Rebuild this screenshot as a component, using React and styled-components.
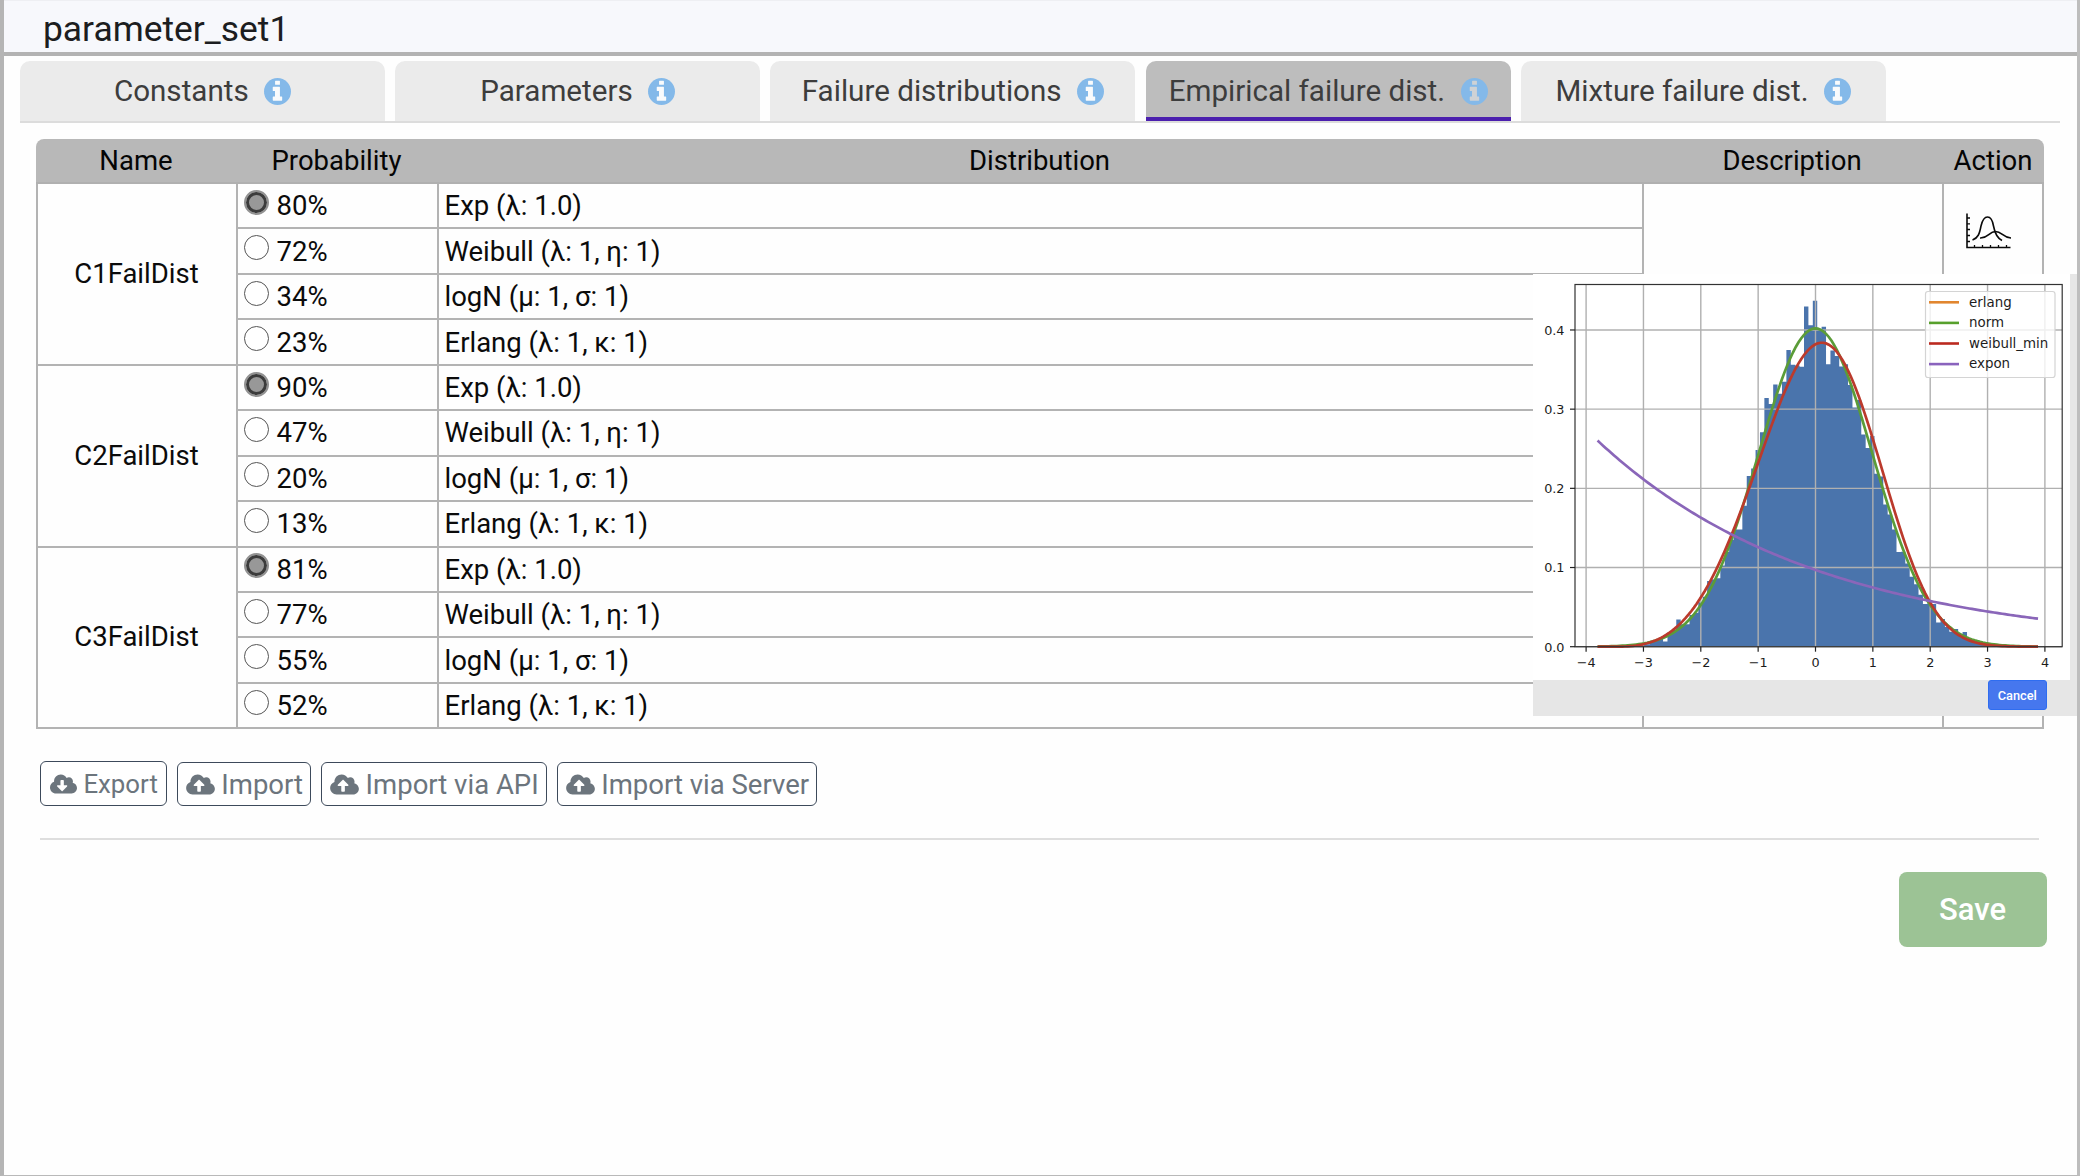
import React from 'react';
import styled, { createGlobalStyle } from 'styled-components';
import { FaCloudDownloadAlt, FaCloudUploadAlt } from 'react-icons/fa';

const GlobalStyle = createGlobalStyle`
  * { box-sizing: border-box; }
  body {
    margin: 0;
    background: #fefefe;
    font-family: Roboto, "Liberation Sans", sans-serif;
    color: #0b0b0b;
  }
`;

const LINE = '#b3b3b3';

const Frame = styled.div`
  position: relative;
  width: 2080px;
  height: 1176px;
  overflow: hidden;
  background: #fefefe;
  border-left: 4px solid #b5b5b5;
  border-right: 3px solid #bdbdbd;
  border-bottom: 1px solid #b9b9b9;
`;

const TitleBar = styled.header`
  display: flex;
  align-items: center;
  height: 56px;
  padding: 4px 0 0 39px;
  background: #f7f8fc;
  border-top: 1px solid #eeeff3;
  border-bottom: 4px solid #b3b3b3;
  font-size: 35.4px;
  color: #1c1d20;
`;

const Tabs = styled.nav`
  display: flex;
  gap: 10.1px;
  height: 62px;
  margin: 5px 17px 0 16px;
  border-bottom: 2px solid #dcdcdc;
`;

const Tab = styled.div`
  display: flex;
  align-items: center;
  justify-content: center;
  gap: 15.5px;
  width: 365.1px;
  height: 60px;
  padding-top: ${(p) => (p.$active ? '4px' : '0')};
  border-radius: 10px 10px 0 0;
  background: ${(p) => (p.$active ? '#bdbdbd' : '#ebebeb')};
  border-bottom: ${(p) => (p.$active ? '4px solid #4b1fae' : '0')};
  font-size: 29.6px;
  color: #3d3d3d;
  white-space: nowrap;
`;

const Table = styled.section`
  width: 2008px;
  margin: 16px 0 0 32px;
`;

const HeadRow = styled.div`
  display: grid;
  grid-template-columns: 200px 201px 1205px 300px 102px;
  height: 45px;
  border-radius: 8px 8px 0 0;
  background: #b8b8b8;
  border-bottom: 2px solid #b0b0b0;
`;

const HeadCell = styled.div`
  display: flex;
  align-items: center;
  justify-content: center;
  padding-bottom: 1px;
  font-size: 27.5px;
  color: #050505;
`;

const Group = styled.div`
  display: grid;
  grid-template-columns: 200px 1406px 300px 102px;
  height: 181.8px;
`;

const NameCell = styled.div`
  display: flex;
  align-items: center;
  justify-content: center;
  padding: 0 1px 1px 0;
  border-left: 2px solid ${LINE};
  border-bottom: 2px solid ${LINE};
  font-size: 27.5px;
`;

const Options = styled.div`
  display: flex;
  flex-direction: column;
`;

const Option = styled.div`
  display: grid;
  grid-template-columns: 201px 1205px;
  height: 45.45px;
  font-size: 27.5px;
`;

const ProbabilityCell = styled.div`
  display: flex;
  align-items: center;
  gap: 7.5px;
  padding-left: 6px;
  border-left: 2px solid ${LINE};
  border-bottom: 2px solid ${LINE};
`;

const DistributionCell = styled.div`
  display: flex;
  align-items: center;
  padding-left: 5.5px;
  border-left: 2px solid ${LINE};
  border-bottom: 2px solid ${LINE};
`;

const Radio = styled.span`
  width: 25px;
  height: 25px;
  margin-bottom: 7px;
  border-radius: 50%;
  border: ${(p) => (p.$checked ? '2px solid #929292' : '1.5px solid #555')};
  background: ${(p) => (p.$checked ? '#989898' : '#fff')};
  box-shadow: ${(p) => (p.$checked ? 'inset 0 0 0 3px #3c3c3c' : 'none')};
`;

const DescriptionCell = styled.div`
  border-left: 2px solid ${LINE};
  border-bottom: 2px solid ${LINE};
`;

const ActionCell = styled.div`
  display: flex;
  align-items: flex-start;
  padding: 29px 0 0 22px;
  border-left: 2px solid ${LINE};
  border-right: 2px solid ${LINE};
  border-bottom: 2px solid ${LINE};
`;

const Transfers = styled.div`
  display: flex;
  align-items: flex-end;
  gap: 10px;
  height: 44px;
  margin: 33px 0 0 36.4px;
`;

const TransferButton = styled.button`
  display: flex;
  align-items: center;
  justify-content: center;
  gap: 6.5px;
  width: ${(p) => p.$width}px;
  height: ${(p) => (p.$small ? 45 : 44)}px;
  padding: 0;
  border: 1.5px solid #3d4a5b;
  border-radius: 6px;
  background: #fff;
  color: #6c757d;
  font-family: inherit;
  font-size: ${(p) => (p.$small ? 25.8 : 27.5)}px;
  white-space: nowrap;

  svg {
    width: ${(p) => (p.$small ? 27 : 29)}px;
    height: ${(p) => (p.$small ? 22 : 23)}px;
  }
`;

const Divider = styled.hr`
  width: 1999px;
  height: 2px;
  margin: 32px 0 0 36px;
  border: 0;
  background: #dedede;
`;

const SaveRow = styled.footer`
  display: flex;
  justify-content: flex-end;
  padding: 32px 30.5px 0 0;
`;

const SaveButton = styled.button`
  width: 148px;
  height: 75px;
  border: 0;
  border-radius: 8px;
  background: #9cc395;
  color: #fff;
  font: 500 31px Roboto, "Liberation Sans", sans-serif;
`;

const Popup = styled.aside`
  position: absolute;
  left: 1529px;
  top: 274px;
  width: 545px;
  height: 442px;
  background: #e6e6e6;
`;

const PlotPanel = styled.div`
  width: 537px;
  height: 406px;
  background: #fff;

  svg { display: block; }
  text { font-family: "DejaVu Sans", sans-serif; fill: #1c1c1c; }
`;

const PopupFooter = styled.div`
  display: flex;
  justify-content: flex-end;
  padding-right: 31.5px;
`;

const CancelButton = styled.button`
  width: 58.5px;
  height: 30px;
  padding: 0;
  border: 1px solid #2f6df0;
  border-radius: 3px;
  background: #4677ee;
  color: #fff;
  font: 500 12.8px Roboto, "Liberation Sans", sans-serif;
`;

const EdgeHandle = styled.div`
  position: absolute;
  right: -3px;
  top: 453px;
  width: 2px;
  height: 39px;
  background: linear-gradient(#555 0 14px, #eee 14px 26px, #222 26px 28px, #666 28px);
`;

const tabs = [
  { label: 'Constants' },
  { label: 'Parameters' },
  { label: 'Failure distributions' },
  { label: 'Empirical failure dist.', active: true },
  { label: 'Mixture failure dist.' },
];

const distributions = ['Exp (λ: 1.0)', 'Weibull (λ: 1, η: 1)', 'logN (μ: 1, σ: 1)', 'Erlang (λ: 1, κ: 1)'];

const groups = [
  { name: 'C1FailDist', probabilities: [80, 72, 34, 23] },
  { name: 'C2FailDist', probabilities: [90, 47, 20, 13] },
  { name: 'C3FailDist', probabilities: [81, 77, 55, 52] },
];

const X0 = 282.5;
const UX = 57.35;
const Y0 = 372.7;
const UY = 791.8;
const px = (v) => X0 + v * UX;
const py = (v) => Y0 - v * UY;

const BIN = 0.0768;
const START = -3.81;
const bins = [
  0, 0, 0, 0.001, 0.001, 0.001, 0.001, 0.002, 0.002, 0.003, 0.004, 0.003, 0.006, 0.008, 0.011, 0.0065, 0.018, 0.021,
  0.0345, 0.0285, 0.0285, 0.04, 0.043, 0.056, 0.063, 0.083, 0.085, 0.0865, 0.1025, 0.1195, 0.1348, 0.148, 0.148,
  0.178, 0.2155, 0.225, 0.2485, 0.2707, 0.314, 0.3065, 0.3313, 0.3195, 0.3345, 0.3747, 0.356, 0.355, 0.3536, 0.4295,
  0.406, 0.437, 0.4, 0.404, 0.3566, 0.374, 0.367, 0.354, 0.3566, 0.3305, 0.302, 0.3115, 0.268, 0.251, 0.266, 0.2185,
  0.215, 0.1795, 0.167, 0.148, 0.1196, 0.12, 0.105, 0.0885, 0.079, 0.0655, 0.054, 0.055, 0.054, 0.0305, 0.035, 0.025,
  0.019, 0.0225, 0.015, 0.0185, 0.008, 0.006, 0.005, 0.003, 0.003, 0.002, 0.001, 0.001,
];

const norm = (x) => 0.402 * Math.exp((-x * x) / (2 * 0.992 * 0.992));
const weibull = (x) => {
  const z = Math.max(0, (x + 3.58) / 3.966);
  return (4 / 3.966) * z ** 3 * Math.exp(-(z ** 4));
};
const expon = (x) => 0.261 * Math.exp(-0.26 * (x + 3.81));

const curve = (f) => {
  const points = [];
  for (let i = 0; i <= 160; i += 1) {
    const x = -3.8 + (7.68 * i) / 160;
    points.push(`${px(x).toFixed(2)},${py(f(x)).toFixed(2)}`);
  }
  return points.join(' ');
};

const histogram =
  `M${px(START)} ${Y0}` +
  bins.map((h, i) => `V${py(h).toFixed(2)}H${px(START + BIN * (i + 1)).toFixed(2)}`).join('') +
  `V${Y0}Z`;

const legend = [
  { label: 'erlang', color: '#e1862f' },
  { label: 'norm', color: '#57a02c' },
  { label: 'weibull_min', color: '#bb2a20' },
  { label: 'expon', color: '#8a63bd' },
];

function Plot() {
  const xs = [-4, -3, -2, -1, 0, 1, 2, 3, 4];
  const ys = [0, 0.1, 0.2, 0.3, 0.4];
  return (
    <svg width="537" height="406" viewBox="0 0 537 406">
      <path d={histogram} fill="#4a74ac" />
      {xs.map((x) => (
        <line key={x} x1={px(x)} x2={px(x)} y1="10" y2={Y0} stroke="#b0b0b0" strokeWidth="1.4" />
      ))}
      {ys.map((y) => (
        <line key={y} x1="42" x2="529" y1={py(y)} y2={py(y)} stroke="#b0b0b0" strokeWidth="1.4" />
      ))}
      <g fill="none" strokeWidth="2.7">
        <polyline points={curve(norm)} stroke="#5b9c38" />
        <polyline points={curve(weibull)} stroke="#bb3a2c" />
        <polyline points={curve(expon)} stroke="#8a66b9" />
      </g>
      <rect x="42" y="10.5" width="487.2" height="362.2" fill="none" stroke="#333" strokeWidth="1.2" />
      {xs.map((x) => (
        <g key={x}>
          <line x1={px(x)} x2={px(x)} y1={Y0} y2={Y0 + 5} stroke="#222" strokeWidth="1.2" />
          <text x={px(x) + 0.1} y="393" fontSize="12.8" textAnchor="middle">
            {x < 0 ? `−${-x}` : x}
          </text>
        </g>
      ))}
      {ys.map((y) => (
        <g key={y}>
          <line x1="37" x2="42" y1={py(y)} y2={py(y)} stroke="#222" strokeWidth="1.2" />
          <text x="31.5" y={py(y) + 4.8} fontSize="12.8" textAnchor="end">
            {y.toFixed(1)}
          </text>
        </g>
      ))}
      <rect x="392.5" y="17.5" width="129.5" height="86" rx="2.5" fill="#fff" fillOpacity="0.8" stroke="#d4d4d4" strokeWidth="1.2" />
      {legend.map((item, i) => (
        <g key={item.label}>
          <line x1="396" x2="426" y1={28.3 + i * 20.6} y2={28.3 + i * 20.6} stroke={item.color} strokeWidth="2.6" />
          <text x="436" y={32.6 + i * 20.6} fontSize="13.4">
            {item.label}
          </text>
        </g>
      ))}
    </svg>
  );
}

function InfoIcon({ active }) {
  return (
    <svg width="27" height="27" viewBox="0 0 1536 1536">
      <circle cx="768" cy="768" r="768" fill="#84b9e9" />
      <g fill={active ? '#cfd2d5' : '#fafbfc'}>
        <rect x="630" y="150" width="276" height="240" rx="32" />
        <path d="M530 500H874Q906 500 906 532V1046H1002Q1034 1046 1034 1078V1258Q1034 1290 1002 1290H530Q498 1290 498 1258V1078Q498 1046 530 1046H626V744H530Q498 744 498 712V532Q498 500 530 500Z" />
      </g>
    </svg>
  );
}

function CurveIcon() {
  return (
    <svg width="45" height="36" viewBox="0 0 45 36" fill="none" stroke="#0a0a0a" strokeWidth="1.6">
      <path d="M1 0.5V34.5H44.5" />
      <path
        d="M1 5H4M1 10.8H4M1 16.5H4M1 22.5H4M1 28.5H4M8.5 34V32M16.5 34V32M24.5 34V32M32.5 34V32M40.5 34V32"
        strokeWidth="1.3"
      />
      <path d="M6.5 27C12 25 13.5 21 15 13C16.5 6.5 18.5 4 21.5 4C24.5 4 26.5 7 27.5 13C29 21 31 25 36 27.5" />
      <path d="M14 25C22 25.5 23 18.5 29.5 18.5C36 18.5 37 25 45 25" />
    </svg>
  );
}

export default function App() {
  return (
    <>
      <GlobalStyle />
      <Frame>
        <TitleBar>parameter_set1</TitleBar>
        <Tabs>
          {tabs.map((tab) => (
            <Tab key={tab.label} $active={tab.active}>
              {tab.label}
              <InfoIcon active={tab.active} />
            </Tab>
          ))}
        </Tabs>
        <Table>
          <HeadRow>
            {['Name', 'Probability', 'Distribution', 'Description', 'Action'].map((title) => (
              <HeadCell key={title}>{title}</HeadCell>
            ))}
          </HeadRow>
          {groups.map((group) => (
            <Group key={group.name}>
              <NameCell>{group.name}</NameCell>
              <Options>
                {group.probabilities.map((value, i) => (
                  <Option key={distributions[i]}>
                    <ProbabilityCell>
                      <Radio $checked={i === 0} />
                      {value}%
                    </ProbabilityCell>
                    <DistributionCell>{distributions[i]}</DistributionCell>
                  </Option>
                ))}
              </Options>
              <DescriptionCell />
              <ActionCell>
                <CurveIcon />
              </ActionCell>
            </Group>
          ))}
        </Table>
        <Transfers>
          <TransferButton $width={127} $small>
            <FaCloudDownloadAlt />
            Export
          </TransferButton>
          <TransferButton $width={134}>
            <FaCloudUploadAlt />
            Import
          </TransferButton>
          <TransferButton $width={226}>
            <FaCloudUploadAlt />
            Import via API
          </TransferButton>
          <TransferButton $width={260}>
            <FaCloudUploadAlt />
            Import via Server
          </TransferButton>
        </Transfers>
        <Divider />
        <SaveRow>
          <SaveButton>Save</SaveButton>
        </SaveRow>
        <Popup>
          <PlotPanel>
            <Plot />
          </PlotPanel>
          <PopupFooter>
            <CancelButton>Cancel</CancelButton>
          </PopupFooter>
        </Popup>
        <EdgeHandle />
      </Frame>
    </>
  );
}
